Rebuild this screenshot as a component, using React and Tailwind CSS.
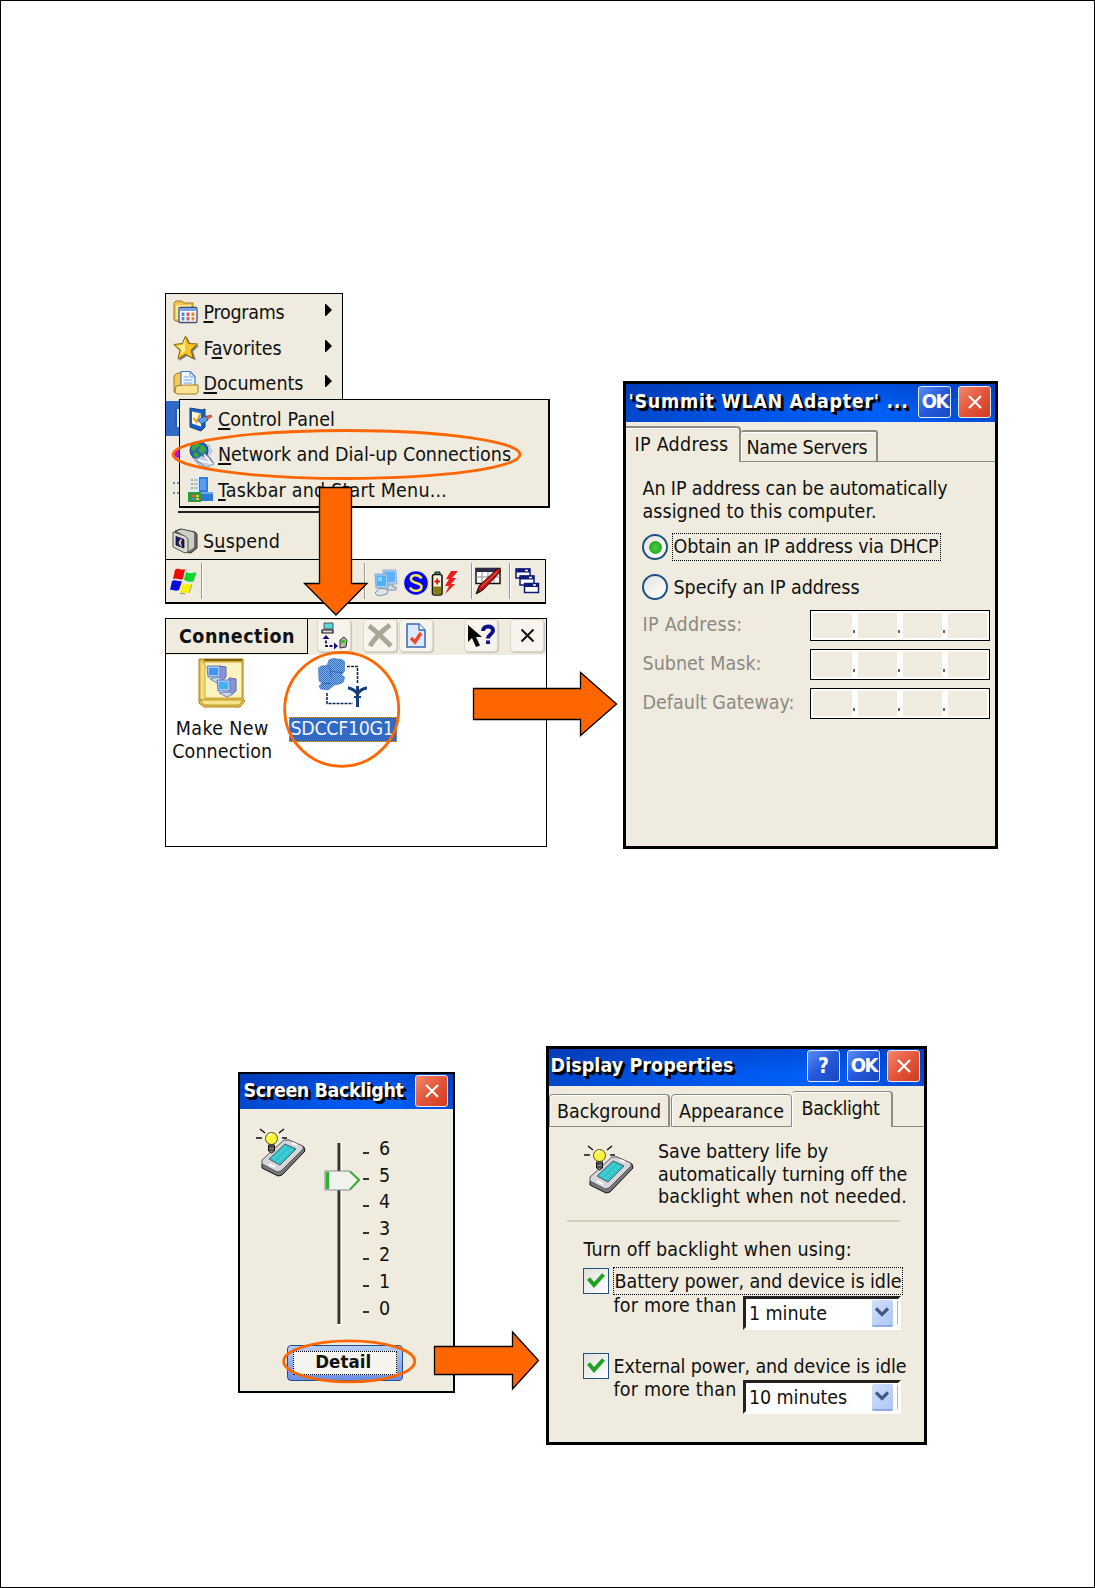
import React, { useLayoutEffect, useRef } from 'react';

// Spreads the letters of a label so that it fills the given width
const Fit = ({ w, className = '', children }) => {
  const ref = useRef(null);

  useLayoutEffect(() => {
    const el = ref.current;
    el.style.letterSpacing = '0px';
    const natural = el.getBoundingClientRect().width;
    el.style.letterSpacing = `${(w + 2.5 - natural) / el.textContent.length}px`;
  }, [w]);

  return (
    <span ref={ref} className={`inline-block shrink-0 pt-[2px] pl-[0.5px] leading-[20px] whitespace-pre ${className}`}>
      {children}
    </span>
  );
};

const U = ({ children }) => (
  <span className="underline decoration-[1.5px] underline-offset-[2px] [text-decoration-skip-ink:none]">{children}</span>
);

/* ---------- icons ---------- */

const ProgramsIcon = () => (
  <svg width="26" height="26" viewBox="0 0 26 26">
    <path d="M1 21V4l2-2h6l2 2h9v4H6v15z" fill="#f3c54c" stroke="#a9781c" />
    <path d="M3 20V6h15v3H7v12z" fill="#fde79a" />
    <rect x="6" y="8.500" width="18" height="15" rx="1" fill="#fff" stroke="#3f5275" strokeWidth="1.300" />
    <rect x="6.500" y="9" width="17" height="3" fill="#79a5e6" />
    <path d="M8.500 13.500h3v3.500h-3zM8.500 18h3v3.500h-3z" fill="#4f8fe0" />
    <path d="M13.500 13.500h3v3.500h-3zM13.500 18h3v3.500h-3z" fill="#e2574c" />
    <path d="M18.500 13.500h3v3.500h-3zM18.500 18h3v3.500h-3z" fill="#e98a3c" />
  </svg>
);

const StarIcon = () => (
  <svg width="26" height="26" viewBox="0 0 26 26">
    <path d="M14 2l4 8 8 .5-6 6 3 9-9-4.500-8 5 2-9-6-6 8-1z" fill="#7d7d78" />
    <path d="M12.500 1l3.300 7.500 8.700.5-6.500 6 2.200 8.500-7.700-4.300L5 24l2-9L.8 9.500 9.300 8.500z" fill="#f9c524" stroke="#8a6510" strokeLinejoin="round" />
    <path d="M12 4l-2 6-6 .7 5 4-1.500 5.500 4.500-4z" fill="#fff08c" />
  </svg>
);

const DocumentsIcon = () => (
  <svg width="26" height="26" viewBox="0 0 26 26">
    <path d="M1 22V6l3-3h5l2 3h10v17H3z" fill="#f2c85a" stroke="#a57a22" />
    <path d="M8 1.500h9l5 5v12H8z" fill="#f7fbff" stroke="#3f78c4" strokeWidth="1.200" />
    <path d="M17 2v5h5M10.500 7h5M10.500 10h9M10.500 13h9" fill="none" stroke="#62a0e4" />
    <path d="M3 16c5-1 12-1 22-1v7l-2 2H4l-2-2z" fill="#fbe392" stroke="#a57a22" />
  </svg>
);

const PanelIcon = () => (
  <svg width="25" height="26" viewBox="0 0 25 26">
    <path d="M2 2l12 2 3-1v18l-4 4-11-4z" fill="#1960c4" stroke="#123f86" />
    <path d="M4 5.500l9 2v13L4 17.500z" fill="#fff6d8" />
    <path d="M5.500 12l3 4 4-8" fill="none" stroke="#e09a24" strokeWidth="1.800" />
    <path d="M10 14.500l3-3 6-1.500 1 4-6 4z" fill="#5d9fe4" stroke="#1c55a8" />
    <path d="M18 10.500l5-1.500 1 2-5 2z" fill="#df6b45" stroke="#963d26" strokeWidth=".7" />
  </svg>
);

const GlobeIcon = () => (
  <svg width="27" height="27" viewBox="0 0 27 27">
    <path d="M14 3l7 1 3 7-7 7z" fill="#c8d3e4" stroke="#a9b4c8" />
    <circle cx="11" cy="9.500" r="9" fill="#2468b0" stroke="#193f78" />
    <path d="M5 3c3-2 7-1 7 1s-3 2-4 4-4 3-5 0zM13 4c3 0 5 3 5 6l-4 3-4-3zM6 11l5 2-1 4-4-2z" fill="#3fa845" />
    <path d="M4 16c3 3 6 2 9-1l9 1 4 7-6 3-8-1z" fill="#c3cee4" stroke="#8f9db8" />
    <path d="M16 13l8 10M10 19l12 3" stroke="#fff" strokeWidth="1.600" />
    <path d="M8 19l8 6M19 14l6 8" stroke="#6d83ac" />
  </svg>
);

const TaskbarIcon = () => (
  <svg width="26" height="26" viewBox="0 0 26 26">
    <rect x="1" y="0" width="19" height="17" fill="#2f7be0" />
    <rect x="1" y="0" width="10" height="15" fill="#d9edfc" />
    <path d="M3 3h2M3 7h2M3 11h2" stroke="#e1a32a" strokeWidth="2" />
    <path d="M6 3h4M6 7h4M6 11h4" stroke="#76a9db" />
    <path d="M12 2h6v11h-6z" fill="#5b9df0" />
    <path d="M0 15h13v10H0z" fill="#35963a" />
    <path d="M4 18h3v2H4z" fill="#ed5b33" />
    <path d="M8 18h3v2H8z" fill="#b3e44a" />
    <path d="M4 21h3v2H4z" fill="#4b8ce8" />
    <path d="M8 21h3v2H8z" fill="#f3cf3b" />
    <path d="M13 15h12v9H13z" fill="#3079d0" />
    <path d="M13 15h12v2H13z" fill="#6aa8ee" />
  </svg>
);

const SuspendIcon = () => (
  <svg width="26" height="26" viewBox="0 0 26 26">
    <path d="M3 3l6-2 14 3 2 2v14l-6 5-6-1z" fill="#6b6b64" stroke="#333" />
    <path d="M5 3l5-1.500 12 3v15l-6 4-3-15z" fill="#cfcfca" />
    <path d="M1 4l12 4 3 3v13l-3 1-12-6z" fill="#d9d9d6" stroke="#55554f" />
    <path d="M4 8.500l8 3v8.500l-8-3z" fill="#141a86" stroke="#000" strokeWidth=".7" />
    <path d="M9.500 11.500c-3 1-3 4.500 0 6.500-1.500-2-1.500-4.500 0-6.500z" fill="#ffe84a" stroke="#ffe84a" />
  </svg>
);

const StartFlag = () => (
  <svg width="27" height="27" viewBox="0 0 27 27">
    <path d="M26 5l-3 9M22 16l-3 9M10 25l5 1" stroke="#8c8c84" fill="none" />
    <path d="M5 2c3-3 6 1 10-1l-2 10c-3 2-6-2-10 0z" fill="#f00a0a" />
    <path d="M16 4c4 2 7 1 10 0l-3 9c-3 2-6 0-9-1z" fill="#0bd82c" />
    <path d="M2 13c4-2 6 1 10 0l-3 9c-4 2-6-1-9 0z" fill="#0b0be0" />
    <path d="M13 15c3 2 6 2 9 0l-3 9c-3 3-6 0-9 0z" fill="#fff200" />
  </svg>
);

const NetMonitors = () => (
  <svg width="24" height="28" viewBox="0 0 24 28">
    <path d="M9 1h13l1 14H10z" fill="#b7d3f0" stroke="#8fb0d6" />
    <path d="M10.500 2.500h10.500v10.500h-10.500z" fill="#5fb0f6" />
    <path d="M14 16h5v2h3v3h-9z" fill="#d7dde5" stroke="#8190a4" />
    <path d="M1 5h12l1 14H2z" fill="#a8d0f8" stroke="#8aa6c8" />
    <path d="M2.500 6.500h9.500v10.500h-9.500z" fill="#4cb0fb" />
    <path d="M4 8h4v4h-4z" fill="#8fd0ff" />
    <path d="M5 19.500h6l3 3-1 2.500-9 2-3-3z" fill="#dde3eb" stroke="#8190a4" />
  </svg>
);

const BadgeS = () => (
  <svg width="24" height="26" viewBox="0 0 24 26">
    <circle cx="12" cy="13" r="11.800" fill="#0606f2" />
    <path d="M17.500 8.500C15 3.500 6 4.500 7 9.500c1 4 10 3 10.500 7 .5 5-9 6-11.500 1" fill="none" stroke="#f2e95c" strokeWidth="2.600" />
  </svg>
);

const BatteryIcon = () => (
  <svg width="28" height="26" viewBox="0 0 28 26">
    <path d="M4 2h5v3H4z" fill="#3ab6a0" stroke="#111" />
    <rect x="1.500" y="4.500" width="9.500" height="20.500" rx="2" fill="#f6f3e0" stroke="#14140a" strokeWidth="1.600" />
    <path d="M2.300 16.500h8v8h-8z" fill="#7f7d14" />
    <path d="M3.500 11.500h5.500M6.200 8.500v6" stroke="#e01414" strokeWidth="1.800" />
    <path d="M20 1h7l-6 7h4l-5 6h4L14 24l4-8h-4l4-7h-3z" fill="#ee1c1c" />
  </svg>
);

const PenIcon = () => (
  <svg width="27" height="28" viewBox="0 0 27 28">
    <rect x="1" y="1.500" width="24" height="15" fill="#fff" stroke="#111" strokeWidth="1.500" />
    <path d="M1 1h24v4H1z" fill="#2b2b45" />
    <path d="M1 10h24M7 5v11M13 5v11M19 5v11" stroke="#8a8a8a" />
    <path d="M23 1l3 3L8 23l-7 4 3-8z" fill="#c51616" stroke="#3b0808" />
    <path d="M1 27l2-5 3 3z" fill="#222" />
    <path d="M22 5L6 20" stroke="#f26a5a" />
  </svg>
);

const CascadeIcon = () => (
  <svg width="25" height="27" viewBox="0 0 25 27" fill="#fff" stroke="#0c1a78" strokeWidth="1.500">
    <path d="M1 1h14v9H1z" />
    <path d="M1 2.500h14" strokeWidth="4" />
    <path d="M5 8h14v9H5z" />
    <path d="M5 9.500h14" strokeWidth="4" />
    <path d="M9.500 15.500h14v9h-14z" />
    <path d="M9.500 17h14" strokeWidth="4" />
    <path d="M10 2.500h3M14 9.500h3M18 17h3" stroke="#fff" />
  </svg>
);

const LinkIcon = () => (
  <svg width="28" height="28" viewBox="0 0 28 28">
    <path d="M4 1h9v6H4z" fill="#53d7dc" stroke="#555" />
    <path d="M2 8h11v3H2z" fill="#ddd" stroke="#111" strokeWidth="1.200" />
    <path d="M6 14v10h10" fill="none" stroke="#10107c" strokeWidth="1.800" strokeDasharray="3 1.500" />
    <path d="M2.500 17L6 13l3.500 4zM14 20.500l4 3.500-4 3.500z" fill="#10107c" />
    <path d="M20 18l4-3 3 3-1 7-6 1z" fill="#b7b7b0" stroke="#333" />
    <path d="M21 18h4v3h-4z" fill="#38c428" />
  </svg>
);

const DeleteIcon = () => (
  <svg width="28" height="26" viewBox="0 0 28 26">
    <path d="M3 3c6 4 14 12 22 20M24 2C17 7 9 15 4 23" stroke="#aaa795" strokeWidth="5" fill="none" />
  </svg>
);

const PropertiesIcon = () => (
  <svg width="20" height="26" viewBox="0 0 20 26">
    <path d="M1 1h12l6 6v17H1z" fill="#dce9ff" stroke="#3467b9" strokeWidth="1.500" />
    <path d="M13 1v6h6" fill="#fff" stroke="#3467b9" strokeWidth="1.300" />
    <path d="M5 15l4 4 6-9" fill="none" stroke="#f04528" strokeWidth="3.400" />
  </svg>
);

const HelpIcon = () => (
  <svg width="28" height="24" viewBox="0 0 28 24">
    <path d="M1 1v17l4-4 4 9 4-1.500-4-8.500h6z" fill="#050505" />
    <path d="M16 7c0-6 10-6 10-.5 0 4-5 4-5 8" fill="none" stroke="#10108a" strokeWidth="4" />
    <path d="M19 16.500h4v3.500h-4z" fill="#10108a" />
  </svg>
);

const NewConnectionIcon = () => (
  <svg width="48" height="50" viewBox="0 0 48 50">
    <path d="M1 1h44v40l2 2-5 6H6l-5-4z" fill="#e9c64a" stroke="#a9831f" />
    <path d="M6 4h38v36H6z" fill="#fdf3c0" stroke="#c49b2c" />
    <path d="M6 2h38" stroke="#7d5f10" strokeWidth="2" />
    <path d="M2 2l5 4v37l-5-2z" fill="#f6dc71" stroke="#c49b2c" strokeWidth=".8" />
    <path d="M2 42h43l-4 5H6z" fill="#f9e48c" stroke="#a9831f" strokeWidth=".8" />
    <path d="M21 8l7 1v10l-5 5-4-2z" fill="#8b93da" stroke="#5d66b5" />
    <path d="M9 8h13v11H10z" fill="#a9c5f4" stroke="#5d7fc4" />
    <path d="M11 10h9v7h-9z" fill="#3f96f5" />
    <path d="M12 21l8-2 5 3-6 3z" fill="#cdd7ec" stroke="#7388b9" />
    <path d="M31 20l7 1v12l-5 4-3-3z" fill="#8b93da" stroke="#5d66b5" />
    <path d="M19 22h13v11H20z" fill="#a9c5f4" stroke="#5d7fc4" />
    <path d="M21 24h9v7h-9z" fill="#3fb4f5" />
    <path d="M21 35l10-1 4 2-6 3z" fill="#cdd7ec" stroke="#7388b9" />
  </svg>
);

const AdapterIcon = () => (
  <svg width="50" height="50" viewBox="0 0 50 50">
    <defs>
      <pattern id="dither" width="2" height="2" patternUnits="userSpaceOnUse">
        <rect width="2" height="2" fill="#7cb0ea" />
        <rect width="1" height="1" fill="#3a70c4" />
        <rect x="1" y="1" width="1" height="1" fill="#3a70c4" />
      </pattern>
    </defs>
    <path d="M11 2l4-1.500 9 1 2.500 2V13l-3 4 3 2-1 5-4 2-5 1-4 3-2 2-8-1-1.500-3L4 25l-3-2L.5 10 3 8l6-.5z" fill="url(#dither)" stroke="#3d6fbe" strokeWidth=".6" />
    <path d="M10 8l2 1.500 1 9M14 13.500l10 1M4 26l9-1" fill="none" stroke="#2456a8" strokeWidth=".8" />
    <path d="M29 8.500h10.500v17M9 35v10.500h26" fill="none" stroke="#102a5c" strokeWidth="1.600" strokeDasharray="3 1" />
    <path d="M30 30c3 0 8 3 9.500 6 1.500-3 6-6 9.500-6M39.500 28v21" fill="none" stroke="#163f7a" strokeWidth="3" />
    <path d="M36 39h7" stroke="#163f7a" strokeWidth="2" />
  </svg>
);

const BacklightIcon = () => (
  <svg width="50" height="50" viewBox="0 0 50 50">
    <path d="M4 1l5 4M28 1l-5 4M0 10h6M26 10h5" stroke="#111" strokeWidth="1.500" />
    <path d="M6 36l22-22 4-2 16 7 1 4-23 24-4 1-16-8z" fill="#77777b" stroke="#111" />
    <path d="M6 32l22-20h5l14 6v3L25 43l-4 1-15-8z" fill="#d5d5da" stroke="#55555a" />
    <path d="M13 31l16-15 11 5-16 16z" fill="#2fc6cd" stroke="#4b5f63" />
    <path d="M17 31l13-12M21 34l14-13" stroke="#8ceef0" strokeDasharray="1 1" />
    <path d="M36 15l5 2M13 36l6 3" stroke="#fff" strokeWidth="2" />
    <circle cx="15.500" cy="10.500" r="6" fill="#fdf53c" stroke="#555510" />
    <path d="M13 8l2-2" stroke="#fff" strokeWidth="2" />
    <path d="M12.500 17h6v6l-3 2-3-2z" fill="#8a8a8a" stroke="#111" />
    <path d="M12 19h7M12 22h7" stroke="#111" />
  </svg>
);

/* ---------- shared window parts ---------- */

const CaptionButton = ({ kind }) => (
  <div
    className={`flex h-[32px] w-[33px] shrink-0 items-center justify-center rounded-[3px] border-[1.5px] border-[#e3ecfb] ${
      kind === 'close'
        ? 'bg-linear-to-br from-[#f0886c] via-[#e4553a] to-[#d03c1c]'
        : 'bg-linear-to-br from-[#5c8cf0] via-[#2458dc] to-[#1848c0]'
    }`}
  >
    {kind === 'close' && (
      <svg width="16" height="16" viewBox="0 0 16 16">
        <path d="M2 2l12 12M14 2L2 14" stroke="#fff" strokeWidth="2.200" />
      </svg>
    )}
    {kind === 'ok' && <Fit w={24} className="pb-[4px] text-[20px] font-bold text-white">OK</Fit>}
    {kind === 'help' && <span className="text-[21px] leading-none font-bold text-white">?</span>}
  </div>
);

const Title = ({ w, children }) => (
  <Fit w={w} className="pb-[2px] text-[19.5px] font-bold text-white [text-shadow:1px_1px_0_#000,2px_2px_0_#000,3px_3px_0_#000]">{children}</Fit>
);

const barClass = 'flex shrink-0 items-center bg-[linear-gradient(180deg,rgba(0,20,120,0.25),rgba(0,60,220,0)_70%),linear-gradient(90deg,#0048cc,#0058ee_45%,#0060fa_70%,#004cd4)]';

/* ---------- start menu ---------- */

const StartItem = ({ icon: Icon, children }) => (
  <div className="flex h-[35.5px] shrink-0 items-center gap-[4px] pt-px pl-[7px]">
    <Icon />
    {children}
    <svg width="7" height="12" viewBox="0 0 7 12" className="mr-[10px] mb-[4px] ml-auto">
      <path d="M0 0h1l6 6-6 6H0z" fill="#000" />
    </svg>
  </div>
);

const StartMenu = () => (
  <div className="absolute top-[293px] left-[165px] flex h-[267px] w-[178px] flex-col border-[1.5px] border-black bg-[#efebde]">
    <StartItem icon={ProgramsIcon}><Fit w={79}><U>P</U>rograms</Fit></StartItem>
    <StartItem icon={StarIcon}><Fit w={76}>F<U>a</U>vorites</Fit></StartItem>
    <StartItem icon={DocumentsIcon}><Fit w={98}><U>D</U>ocuments</Fit></StartItem>
    <div className="flex h-[35px] shrink-0 items-center bg-[#316ac5] pl-[9px]">
      <div className="h-[18px] w-[12px] border-l-2 border-[#1960c4] bg-[#f4ead0]" />
    </div>
    <div className="flex h-[35px] shrink-0 items-center pl-[8px]">
      <div className="h-[9px] w-[12px] rounded-l-full bg-[#c012c8]" />
    </div>
    <div className="flex h-[35px] shrink-0 items-center pl-[7px]">
      <div className="h-[12px] w-[6px] border-y-2 border-dotted border-[#6b86b8]" />
    </div>
    <div className="mt-[5px] ml-[12px] h-[2px] w-[150px] shrink-0 bg-[#222]" />
    <div className="flex grow items-center gap-[4.5px] pt-[11px] pl-[6px]">
      <SuspendIcon />
      <Fit w={75}>S<U>u</U>spend</Fit>
    </div>
  </div>
);

const SubItem = ({ icon: Icon, children }) => (
  <div className="flex h-[35.5px] items-center pt-[1.5px] pl-[8px]">
    <div className="flex w-[29.5px] items-center"><Icon /></div>
    {children}
  </div>
);

const SubMenu = () => (
  <div className="absolute top-[399px] left-[179px] h-[109px] w-[371px] border-[1.5px] border-r-2 border-b-2 border-black bg-[#efebde]">
    <SubItem icon={PanelIcon}><Fit w={115}><U>C</U>ontrol Panel</Fit></SubItem>
    <SubItem icon={GlobeIcon}><Fit w={291}><U>N</U>etwork and Dial-up Connections</Fit></SubItem>
    <SubItem icon={TaskbarIcon}><Fit w={227}><U>T</U>askbar and Start Menu...</Fit></SubItem>
  </div>
);

const Groove = () => <div className="h-full w-[2px] shrink-0 border-r border-white bg-[#9b988c]" />;

const Taskbar = () => (
  <div className="absolute top-[559px] left-[165px] flex h-[45px] w-[381px] items-center border-[1.5px] border-b-2 border-black bg-[#efebde] py-[3px]">
    <div className="flex w-[35px] shrink-0 pl-[4px]"><StartFlag /></div>
    <Groove />
    <div className="grow" />
    <Groove />
    <div className="flex w-[105px] shrink-0 items-center pt-[3px] pl-[8px]">
      <NetMonitors />
      <div className="ml-[6px]"><BadgeS /></div>
      <div className="ml-[3px]"><BatteryIcon /></div>
    </div>
    <Groove />
    <div className="flex w-[36px] shrink-0 pl-[2px]"><PenIcon /></div>
    <Groove />
    <div className="flex w-[34px] shrink-0 pl-[4px]"><CascadeIcon /></div>
  </div>
);

/* ---------- connection folder ---------- */

const ToolButton = ({ className = '', children }) => (
  <div className={`flex h-[33px] w-[34px] shrink-0 items-center justify-center rounded-[4px] border border-[#dcd8ca] bg-[#f6f4ec] shadow-[1px_1px_1px_#c9c5b6] ${className}`}>
    {children}
  </div>
);

const ConnectionWindow = () => (
  <div className="absolute top-[618px] left-[165px] flex h-[229px] w-[382px] flex-col border-[1.5px] border-black bg-white">
    <div className="flex h-[36px] shrink-0 overflow-hidden bg-[#efebde]">
      <div className="flex h-[35px] w-[142px] shrink-0 items-center border-[1.5px] border-t-0 border-l-0 border-black pb-[1px] pl-[12.5px]">
        <Fit w={114} className="font-bold">Connection</Fit>
      </div>
      <ToolButton className="ml-[9px]"><LinkIcon /></ToolButton>
      <ToolButton className="ml-[12px]"><DeleteIcon /></ToolButton>
      <ToolButton className="ml-[2px]"><PropertiesIcon /></ToolButton>
      <ToolButton className="ml-[31px]"><HelpIcon /></ToolButton>
      <ToolButton className="ml-[12px]">
        <svg width="15" height="15" viewBox="0 0 15 15">
          <path d="M1.500 1.500l12 12M13.500 1.500l-12 12" stroke="#111" strokeWidth="2" />
        </svg>
      </ToolButton>
    </div>
    <div className="flex pt-[3px]">
      <div className="flex w-[112px] flex-col items-center">
        <NewConnectionIcon />
        <div className="flex flex-col items-center gap-[0.5px] pt-[9px]">
          <Fit w={91}>Make New</Fit>
          <Fit w={98}>Connection</Fit>
        </div>
      </div>
      <div className="ml-[11px] flex w-[108px] flex-col items-center">
        <AdapterIcon />
        <div className="mt-[9px] flex h-[25px] w-[108px] items-center border border-dotted border-[#d9a54a] bg-[#316ac5] pb-[3px]">
          <Fit w={101} className="text-[#eef3ff]">SDCCF10G1</Fit>
        </div>
      </div>
    </div>
  </div>
);

/* ---------- adapter settings ---------- */

const Radio = ({ checked }) => (
  <div className="flex h-[26px] w-[26px] shrink-0 items-center justify-center rounded-full border-[2.5px] border-[#1d5281] bg-linear-to-br from-[#e4e4de] to-white">
    {checked && <div className="h-[13px] w-[13px] rounded-full bg-radial from-[#45cf3d] to-[#1d9a1c]" />}
  </div>
);

const AddressRow = ({ label, w }) => (
  <div className="flex items-center text-[#8c8984]">
    <div className="flex w-[168px] pb-[3px]"><Fit w={w}>{label}</Fit></div>
    <div className="flex h-[31px] w-[180px] border-[1.5px] border-black bg-white p-[2px]">
      {[0, 1, 2, 3].map((n) => (
        <React.Fragment key={n}>
          <div className="h-full grow bg-[#efebde]" />
          {n < 3 && (
            <div className="flex w-[6px] shrink-0 items-end pb-[5px] pl-[1px]">
              <div className="h-[3px] w-[2px] bg-[#666]" />
            </div>
          )}
        </React.Fragment>
      ))}
    </div>
  </div>
);

const AdapterWindow = () => (
  <div className="absolute top-[381px] left-[623px] flex h-[468px] w-[375px] flex-col border-[3px] border-black bg-[#efebde]">
    <div className={`${barClass} h-[38px] pr-[4px] pb-[2px] pl-[2px]`}>
      <Title w={278}>'Summit WLAN Adapter' ...</Title>
      <div className="ml-auto flex gap-[7px]">
        <CaptionButton kind="ok" />
        <CaptionButton kind="close" />
      </div>
    </div>
    <div className="flex h-[40px] shrink-0 items-end pt-[4px]">
      <div className="flex h-full w-[115px] shrink-0 items-center rounded-tr-[4px] border-t-2 border-r-2 border-t-[#8d8b82] border-r-[#8d8b82] pb-[2px] pl-[8px] shadow-[inset_0_1px_0_#fff]">
        <Fit w={92}>IP Address</Fit>
      </div>
      <div className="flex h-[32px] w-[137px] shrink-0 items-center rounded-t-[3px] border-t-2 border-r-2 border-b-[1.5px] border-[#8d8b82] pl-[5px] shadow-[inset_1px_1px_0_#fff]">
        <Fit w={119}>Name Servers</Fit>
      </div>
      <div className="h-[1.5px] grow bg-[#8d8b82]" />
    </div>
    <div className="flex flex-col pl-[16px]">
      <Fit w={303} className="mt-[15px] self-start">An IP address can be automatically</Fit>
      <Fit w={232} className="mt-[0.5px] self-start">assigned to this computer.</Fit>
      <div className="mt-[12px] flex h-[27px] items-center gap-[4px]">
        <Radio checked />
        <div className="flex h-[28px] w-[269px] items-center border border-dotted border-black pb-[2px]">
          <Fit w={263}>Obtain an IP address via DHCP</Fit>
        </div>
      </div>
      <div className="mt-[13px] flex h-[27px] items-center gap-[5px] pb-px">
        <Radio />
        <Fit w={184}>Specify an IP address</Fit>
      </div>
      <div className="mt-[9px] flex flex-col gap-[8px]">
        <AddressRow label="IP Address:" w={98} />
        <AddressRow label="Subnet Mask:" w={117} />
        <AddressRow label="Default Gateway:" w={150} />
      </div>
    </div>
  </div>
);

/* ---------- screen backlight ---------- */

const BacklightWindow = () => (
  <div className="absolute top-[1072px] left-[238px] flex h-[321px] w-[217px] flex-col border-2 border-black bg-[#efebde]">
    <div className={`${barClass} h-[35px] pr-[5px] pb-px pl-[3px]`}>
      <Title w={158}>Screen Backlight</Title>
      <div className="ml-auto"><CaptionButton kind="close" /></div>
    </div>
    <div className="flex h-[234px] shrink-0">
      <div className="w-[84px] shrink-0 pt-[19px] pl-[15.5px]"><BacklightIcon /></div>
      <div className="pt-[34px]">
        <svg width="38" height="184" viewBox="0 0 38 184">
          <path d="M15 0v181" stroke="#333" strokeWidth="3" />
          <path d="M17.500 0v182h-4" stroke="#fff" strokeWidth="1.500" fill="none" />
          <path d="M1 28h25l10 9-10 10H1z" fill="#f3f3ee" stroke="#7b8a94" />
          <path d="M3.500 29v17" stroke="#2fae35" strokeWidth="3.500" />
          <path d="M26 28.500l9 8.500-9 9.500" fill="none" stroke="#3faa3e" strokeWidth="2" />
        </svg>
      </div>
      <div className="flex flex-col pt-[26.5px] pl-px">
        {[6, 5, 4, 3, 2, 1, 0].map((n) => (
          <div key={n} className="flex h-[26.6px] items-center">
            <div className="mt-[8px] h-[2px] w-[6px] bg-[#333]" />
            <span className="ml-[10px] leading-none">{n}</span>
          </div>
        ))}
      </div>
    </div>
    <div className="mt-[2px] ml-[47px] flex h-[36px] w-[116px] items-center justify-center rounded-[4px] border-[1.5px] border-[#1d4f8c] bg-linear-to-b from-[#b6cdf8] to-[#6c8fe4] p-[5px]">
      <div className="flex h-full w-full items-center justify-center border border-dotted border-black bg-[#f5f4ef] pr-[4px] pb-[4px]">
        <Fit w={54} className="text-[18.5px] font-bold">Detail</Fit>
      </div>
    </div>
  </div>
);

/* ---------- display properties ---------- */

const Checkbox = () => (
  <div className="flex h-[26px] w-[26px] shrink-0 items-center justify-center border-[1.5px] border-[#1d5281] bg-linear-to-br from-[#e0e0da] to-white">
    <svg width="18" height="18" viewBox="0 0 18 18">
      <path d="M1.500 6.500l5.500 6.500 9.500-10.500" fill="none" stroke="#21a121" strokeWidth="4" />
    </svg>
  </div>
);

const Select = ({ w, children }) => (
  <div className="flex h-[34px] w-[158px] items-center border-[3px] border-t-[#222] border-r-white border-b-white border-l-[#222] bg-white pl-[2.5px]">
    <Fit w={w}>{children}</Fit>
    <div className="mr-[4px] ml-auto flex h-[27px] w-[21px] items-center justify-center rounded-[2px] border-b-2 border-[#8eabe6] bg-linear-to-br from-[#d2dffc] to-[#aec6f7]">
      <svg width="14" height="10" viewBox="0 0 14 10">
        <path d="M1 1.500l6 6 6-6" fill="none" stroke="#435a86" strokeWidth="3.200" />
      </svg>
    </div>
    <div className="h-[24px] w-[1.5px] bg-[#9db8e8]" />
  </div>
);

const DisplayWindow = () => (
  <div className="absolute top-[1046px] left-[546px] flex h-[399px] w-[381px] flex-col border-[3px] border-black bg-[#efebde]">
    <div className={`${barClass} h-[37px] pr-[4px] pb-[3px] pl-px`}>
      <Title w={181}>Display Properties</Title>
      <div className="ml-auto flex gap-[7px]">
        <CaptionButton kind="help" />
        <CaptionButton kind="ok" />
        <CaptionButton kind="close" />
      </div>
    </div>
    <div className="flex h-[41px] shrink-0 items-end">
      <div className="flex h-[33px] w-[121px] shrink-0 items-center rounded-t-[4px] border-[1.5px] border-r-2 border-[#8d8b82] pt-px pl-[6.5px] shadow-[inset_1px_1px_0_#fff]">
        <Fit w={102}>Background</Fit>
      </div>
      <div className="ml-[1px] flex h-[33px] w-[121px] shrink-0 items-center rounded-t-[4px] border-[1.5px] border-[#8d8b82] pt-px pl-[6.5px] shadow-[inset_1px_1px_0_#fff]">
        <Fit w={103}>Appearance</Fit>
      </div>
      <div className="flex h-[36px] w-[101px] shrink-0 items-center rounded-t-[4px] border-t-[1.5px] border-r-2 border-[#8d8b82] pb-[3px] pl-[9px] shadow-[inset_1px_1px_0_#fff]">
        <Fit w={76}>Backlight</Fit>
      </div>
      <div className="h-[1.5px] grow bg-[#8d8b82]" />
    </div>
    <div className="flex h-[93px] shrink-0 pt-[13px] pl-[35px]">
      <div className="w-[73.5px] pt-[5px]"><BacklightIcon /></div>
      <div className="flex flex-col items-start gap-[0.5px]">
        <Fit w={168}>Save battery life by</Fit>
        <Fit w={247}>automatically turning off the</Fit>
        <Fit w={247}>backlight when not needed.</Fit>
      </div>
    </div>
    <div className="ml-[18px] h-[2px] w-[333px] shrink-0 bg-[#d0cebd]" />
    <div className="flex flex-col items-start pl-[34px]">
      <Fit w={266} className="mt-[16px]">Turn off backlight when using:</Fit>
      <div className="mt-[7px] flex h-[28px] items-center gap-[4px]">
        <Checkbox />
        <div className="flex h-[28px] w-[290px] items-center border border-dotted border-black">
          <Fit w={285}>Battery power, and device is idle</Fit>
        </div>
      </div>
      <div className="ml-[30px] flex h-[34px] items-start">
        <div className="-mt-px flex w-[130px]"><Fit w={121}>for more than</Fit></div>
        <div className="pt-[1px]"><Select w={76}>1 minute</Select></div>
      </div>
      <div className="mt-[23px] flex h-[28px] items-center gap-[4px]">
        <Checkbox />
        <Fit w={291}>External power, and device is idle</Fit>
      </div>
      <div className="ml-[30px] flex h-[34px] items-start">
        <div className="-mt-[2px] flex w-[130px]"><Fit w={121}>for more than</Fit></div>
        <Select w={96}>10 minutes</Select>
      </div>
    </div>
  </div>
);

// Orange arrows and rings drawn across the windows
const Callouts = () => (
  <svg className="pointer-events-none absolute inset-0" width="1095" height="1588" viewBox="0 0 1095 1588">
    <g fill="#ff6600" stroke="#000" strokeWidth="1.300">
      <path d="M319.500 487.500h32v96h15.500L336 615l-31.500-31.500h15z" />
      <path d="M473.500 688.500h107V672.500L616.500 704l-36 31.500V719.500h-107z" />
      <path d="M434.500 1346.500h78V1332l26 28.500-26 28.500v-14.500h-78z" />
    </g>
    <g fill="none" stroke="#ff6600" strokeWidth="2.800">
      <ellipse cx="346.500" cy="454.500" rx="173.500" ry="24" />
      <circle cx="341.700" cy="709.300" r="57" />
      <ellipse cx="349.200" cy="1361.300" rx="65.500" ry="20.500" />
    </g>
  </svg>
);

const App = () => {
  return (
    <div className="relative h-[1588px] w-[1095px] overflow-hidden border border-black bg-white font-['DejaVu_Sans_Condensed','DejaVu_Sans',sans-serif] text-[19.5px] text-[#111] [font-stretch:condensed]">
      <div className="absolute -top-px -left-px h-[1588px] w-[1095px]">
        <StartMenu />
        <SubMenu />
        <Taskbar />
        <ConnectionWindow />
        <AdapterWindow />
        <BacklightWindow />
        <DisplayWindow />
        <Callouts />
      </div>
    </div>
  );
};

export default App;
